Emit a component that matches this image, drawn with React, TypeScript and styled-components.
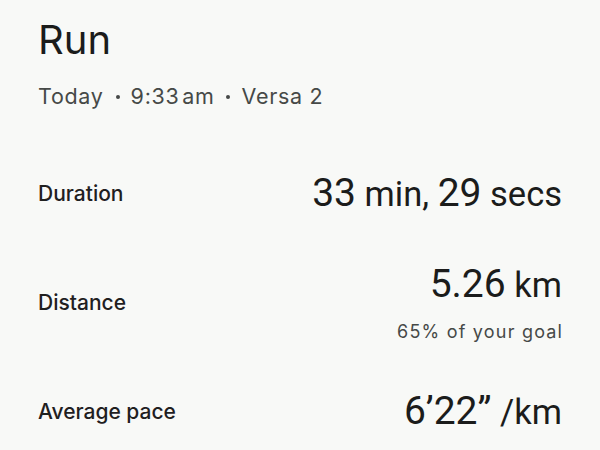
import styled, { createGlobalStyle } from 'styled-components';

const GlobalStyle = createGlobalStyle`
  html, body {
    margin: 0;
    padding: 0;
    background: #f8f9f7;
  }
  body {
    font-family: Inter, "Noto Sans", sans-serif;
    color: #1f1f1f;
  }
`;

const StyledPage = styled.div`
  width: 600px;
  height: 450px;
  box-sizing: border-box;
  padding: 16px 38px 0 38px;
  overflow: hidden;
`;

const StyledTitle = styled.h1`
  margin: 0;
  font-size: 40px;
  font-weight: 400;
  line-height: 48px;
  color: #1b1c1b;
`;

const StyledSubtitle = styled.div`
  margin-top: 18px;
  font-size: 21.5px;
  line-height: 28px;
  letter-spacing: 0.7px;
  color: #464947;
`;

const StyledDot = styled.span`
  display: inline-block;
  width: 4px;
  height: 4px;
  margin: 0 11px 0 12px;
  border-radius: 50%;
  background: #464947;
  vertical-align: 5px;
`;

const StyledStats = styled.div`
  margin-top: 59px;
  display: flex;
  flex-direction: column;
  gap: 43px;
`;

const StyledRow = styled.div`
  display: flex;
  align-items: center;
  justify-content: space-between;
`;

const StyledLabel = styled.div`
  font-size: 21px;
  font-weight: 500;
  color: #1f201f;
`;

const StyledValueBlock = styled.div`
  display: flex;
  flex-direction: column;
  align-items: flex-end;
`;

const StyledValue = styled.div`
  font-family: Roboto, "Noto Sans", sans-serif;
  font-size: 39px;
  line-height: 48px;
  height: 48px;
  color: #1b1c1b;
  white-space: nowrap;
`;

const StyledNumber = styled.span`
  line-height: 1;
`;

const StyledUnit = styled.span`
  font-size: 34.5px;
  line-height: 1;
`;

const StyledNote = styled.div`
  margin-top: 12px;
  font-size: 18px;
  line-height: 24px;
  letter-spacing: 1.2px;
  margin-right: -1.2px;
  color: #464947;
`;

type Part = { text: string; unit?: boolean };

type Stat = {
  label: string;
  parts: Part[];
  note?: string;
};

const stats: Stat[] = [
  {
    label: 'Duration',
    parts: [
      { text: '33' },
      { text: ' min, ', unit: true },
      { text: '29' },
      { text: ' secs', unit: true },
    ],
  },
  {
    label: 'Distance',
    parts: [{ text: '5.26' }, { text: ' km', unit: true }],
    note: '65% of your goal',
  },
  {
    label: 'Average pace',
    parts: [{ text: '6’22”' }, { text: ' /km', unit: true }],
  },
];

const StatRow = ({ stat }: { stat: Stat }) => (
  <StyledRow>
    <StyledLabel>{stat.label}</StyledLabel>
    <StyledValueBlock>
      <StyledValue>
        {stat.parts.map((p, i) =>
          p.unit ? <StyledUnit key={i}>{p.text}</StyledUnit> : <StyledNumber key={i}>{p.text}</StyledNumber>
        )}
      </StyledValue>
      {stat.note && <StyledNote>{stat.note}</StyledNote>}
    </StyledValueBlock>
  </StyledRow>
);

export default function App() {
  return (
    <>
      <GlobalStyle />
      <StyledPage>
        <StyledTitle>Run</StyledTitle>
        <StyledSubtitle>
          Today
          <StyledDot />
          9:33&#8202;am
          <StyledDot />
          Versa 2
        </StyledSubtitle>
        <StyledStats>
          {stats.map(s => (
            <StatRow key={s.label} stat={s} />
          ))}
        </StyledStats>
      </StyledPage>
    </>
  );
}
